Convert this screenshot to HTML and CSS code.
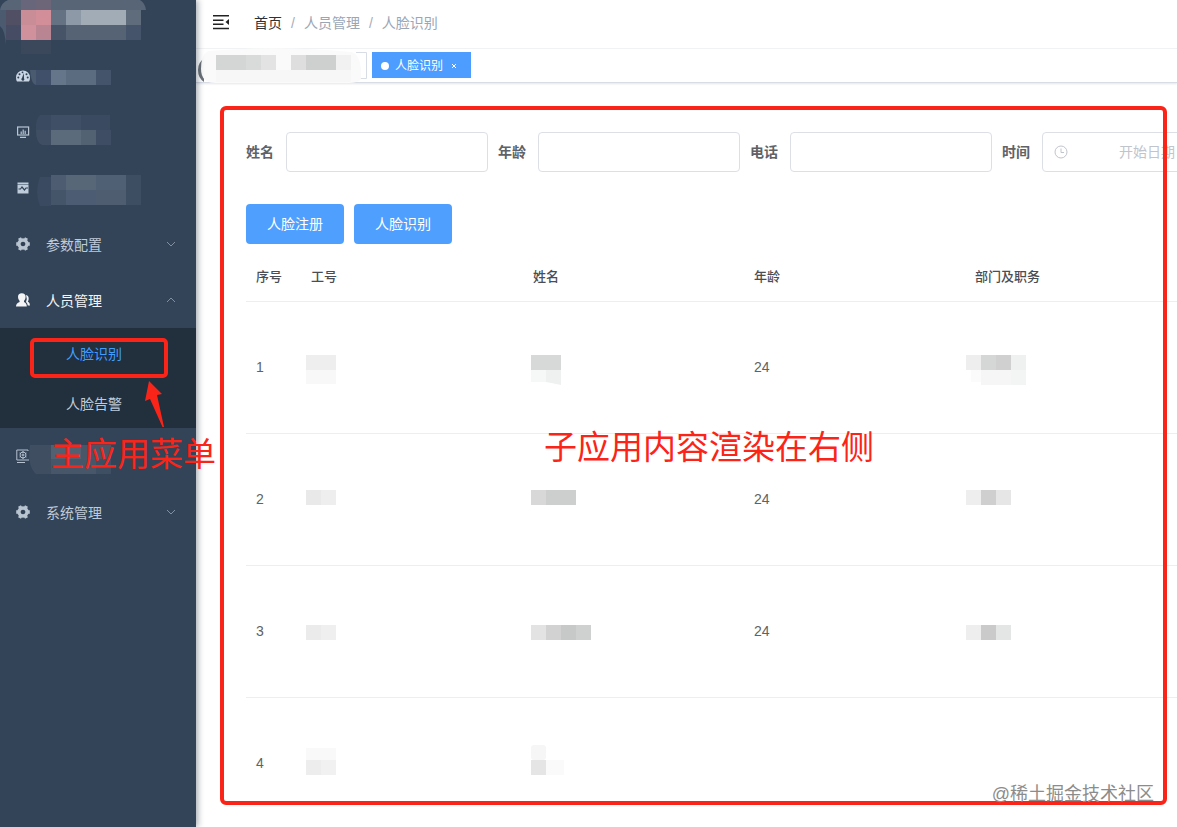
FILE: index.html
```html
<!DOCTYPE html>
<html lang="zh-CN">
<head>
<meta charset="utf-8">
<meta name="viewport" content="width=device-width, initial-scale=1">
<title>人脸识别</title>
<link rel="stylesheet" href="styles.css">
</head>
<body>
<div class="app">
  <aside class="sidebar">
    <svg class="logo" viewBox="0 0 196 48" aria-hidden="true">
      <path d="M8 0H140Q145 3 146 10H0Q1 3 8 0Z" fill="#586576"/>
      <path d="M0 10H6V45Q5 30 0 26Z" fill="#4c5a70"/>
      <rect x="6" y="10" width="15" height="15" fill="#504f64"/><rect x="6" y="25" width="15" height="15" fill="#454c63"/>
      <rect x="21" y="0" width="15" height="10" fill="#68667a"/><rect x="36" y="0" width="15" height="10" fill="#6c6678"/>
      <rect x="21" y="10" width="15" height="15" fill="#c98d98"/><rect x="36" y="10" width="15" height="15" fill="#d28f9a"/>
      <rect x="21" y="25" width="15" height="15" fill="#d0909c"/><rect x="36" y="25" width="15" height="15" fill="#b98592"/>
      <rect x="21" y="40" width="30" height="14" fill="#3b475b"/>
      <rect x="51" y="10" width="15" height="15" fill="#657284"/><rect x="51" y="25" width="15" height="15" fill="#475468"/>
      <rect x="66" y="10" width="15" height="15" fill="#8d99a6"/><rect x="81" y="10" width="45" height="15" fill="#a2acb7"/>
      <rect x="126" y="10" width="15" height="15" fill="#5f6c7c"/>
      <rect x="66" y="25" width="60" height="15" fill="#566375"/><rect x="126" y="25" width="15" height="15" fill="#45546a"/>
    </svg>
    <nav>
      <ul class="menu">
        <li><a class="item" href="#">
          <svg class="icon" viewBox="0 0 14 14"><path d="M7 1.500A7 7 0 0 0 0 8.500Q0 11 1 12.500H13Q14 11 14 8.500A7 7 0 0 0 7 1.500Z" fill="#c9d6e4"/><path d="M7.800 4 8 9.300A1.500 1.500 0 1 1 6 9Z" fill="#304156"/><g fill="#304156"><circle cx="2.300" cy="8.500" r="1"/><circle cx="3.500" cy="5.200" r="1"/><circle cx="6.500" cy="3.300" r=".9"/><circle cx="10.500" cy="5.200" r="1"/><circle cx="11.700" cy="8.500" r="1"/></g></svg>
          <svg class="mask" viewBox="0 0 120 56"><path d="M0 22H6V37Q1 36 0 22Z" fill="#4a5b70"/><rect x="6" y="22" width="15" height="15" fill="#40506a"/><rect x="21" y="22" width="15" height="15" fill="#66768a"/><rect x="36" y="22" width="30" height="15" fill="#5b6b80"/><rect x="66" y="22" width="15" height="15" fill="#44546b"/></svg>
        </a></li>
        <li><a class="item" href="#">
          <svg class="icon" viewBox="0 0 14 14" fill="none" stroke="#b8c5d3" stroke-width="1.200"><rect x="1.600" y="2" width="11" height="8"/><path d="M4 12.300H10M5.200 9V6.500M7.200 9V4.500M9.200 9V5.800"/></svg>
          <svg class="mask" viewBox="0 0 120 56"><path d="M10 11H80V26H6Q5 16 10 11Z" fill="#3a4a60"/><path d="M6 26H21V41H12Q6 39 6 26Z" fill="#3f4e63"/><rect x="21" y="11" width="30" height="15" fill="#3f4f65"/><rect x="21" y="26" width="30" height="15" fill="#5b6b7b"/><rect x="51" y="26" width="15" height="15" fill="#536273"/><rect x="66" y="26" width="15" height="15" fill="#3e4d64"/></svg>
        </a></li>
        <li><a class="item" href="#">
          <svg class="icon" viewBox="0 0 14 14"><path d="M1.500 1.500H12.500V3H1.500ZM1.500 3.500H12.500V12.500H1.500Z" fill="#bfccda"/><path d="M2.500 8H4.500L6 6 8.500 9 10 7H12" fill="none" stroke="#304156" stroke-width="1.200"/></svg>
          <svg class="mask" viewBox="0 0 120 56"><path d="M10 17H21V46H10Q4 32 10 17Z" fill="#3a4a60"/><rect x="21" y="15" width="15" height="15" fill="#4d5c70"/><rect x="36" y="15" width="30" height="15" fill="#586778"/><rect x="66" y="15" width="30" height="15" fill="#506074"/><rect x="21" y="30" width="15" height="15" fill="#445469"/><rect x="36" y="30" width="30" height="15" fill="#4b5c73"/><rect x="66" y="30" width="30" height="15" fill="#4e5e70"/><rect x="96" y="15" width="15" height="30" fill="#3e4e62"/></svg>
        </a></li>
        <li><a class="item" href="#">
          <svg class="icon" viewBox="0 0 14 14"><g fill="none" stroke="#b8c4d0"><circle cx="7" cy="7" r="4" stroke-width="3.400"/><path d="M3.500 1 10.500 13M10.500 1 3.500 13M.2 7H3M11 7H13.800" stroke-width="3.400"/></g><circle cx="7" cy="7" r="2.300" fill="#304156"/></svg>
          <span class="label">参数配置</span>
          <svg class="chevron" viewBox="0 0 10 6"><path d="M1 1 5 5 9 1"/></svg>
        </a></li>
        <li><a class="item open" href="#" aria-expanded="true">
          <svg class="icon" viewBox="0 0 14 14" fill="#f4f4f5"><path d="M2 4Q2 .3 5.800 .3T9.600 4Q9.600 6.500 8 8V9Q10.800 10 10.800 13.500H0Q0 10 3.600 9V8Q2 6.500 2 4Z"/><path d="M10 2Q12.800 2.500 12.700 6 12.500 7.500 11.800 8.500 14 9.500 14 12.500H11.800Q11.500 10 10 9Q11.500 6 10 2Z"/></svg>
          <span class="label">人员管理</span>
          <svg class="chevron" viewBox="0 0 10 6"><path d="M1 5 5 1 9 5"/></svg>
        </a>
          <ul class="submenu">
            <li><a class="subitem active" href="#">人脸识别</a></li>
            <li><a class="subitem" href="#">人脸告警</a></li>
            <li class="note note-box" aria-hidden="true"></li>
            <li class="note note-arrow" aria-hidden="true"><svg viewBox="0 0 20 47"><path d="M4 0 17 13 12 14 19 46H17.500L5 18 0 20Z" fill="#fb2418"/></svg></li>
            <li class="note note-menu">主应用菜单</li>
          </ul>
        </li>
        <li><a class="item" href="#">
          <svg class="icon" viewBox="0 0 14 14" fill="none" stroke="#b5c1ce"><path d="M12 2V1H.8V11H13M1 13.500H9"/><circle cx="7" cy="6" r="3"/><circle cx="7" cy="6" r="1"/><path d="M7 2V4M7 8V10M3.500 4 5 5M9 7 10.500 8M10.500 4 9 5M5 7 3.500 8"/></svg>
          <svg class="mask" viewBox="0 0 120 56"><path d="M0 17H21V46H6Q-3 38 0 17Z" fill="#404e62"/><rect x="21" y="17" width="30" height="14" fill="#526071"/><rect x="51" y="17" width="30" height="14" fill="#485668"/><rect x="21" y="31" width="45" height="15" fill="#48566a"/><rect x="66" y="31" width="15" height="15" fill="#3e4e63"/></svg>
        </a></li>
        <li><a class="item" href="#">
          <svg class="icon" viewBox="0 0 14 14"><g fill="none" stroke="#b8c4d0"><circle cx="7" cy="7" r="4" stroke-width="3.400"/><path d="M3.500 1 10.500 13M10.500 1 3.500 13M.2 7H3M11 7H13.800" stroke-width="3.400"/></g><circle cx="7" cy="7" r="2.300" fill="#304156"/></svg>
          <span class="label">系统管理</span>
          <svg class="chevron" viewBox="0 0 10 6"><path d="M1 1 5 5 9 1"/></svg>
        </a></li>
      </ul>
    </nav>
  </aside>

  <main class="main">
    <header class="navbar">
      <button class="hamburger" type="button" aria-label="收起菜单">
        <svg viewBox="0 0 16 16"><path d="M0 1.700H16M0 6.200H10.500M0 10.200H10.500M0 14.500H16" stroke="#222" stroke-width="1.500"/><path d="M16 5V11L12.500 8Z" fill="#222"/></svg>
      </button>
      <nav class="breadcrumb" aria-label="面包屑">
        <a href="#">首页</a><span class="sep">/</span><span>人员管理</span><span class="sep">/</span><span>人脸识别</span>
      </nav>
    </header>
    <div class="tags">
      <svg class="tags-mask" viewBox="0 0 171 33" aria-hidden="true">
        <path d="M160 3.500H170.500V29.500H160" fill="#fff" stroke="#d8dce5"/>
        <path d="M8 10Q2 13 2 21T8 33Z" fill="#6c7278"/>
        <path d="M12 2Q80 -4 155 3Q166 5 165 29Q165 34 150 34H20Q5 34 5 20T12 2Z" fill="#fafafa"/>
        <rect x="20" y="6" width="30" height="15" fill="#d4d5d5"/><rect x="50" y="6" width="15" height="15" fill="#d9dada"/><rect x="65" y="6" width="15" height="15" fill="#e3e3e3"/>
        <rect x="95" y="6" width="15" height="15" fill="#dedede"/><rect x="110" y="6" width="30" height="15" fill="#cecfcf"/><rect x="140" y="6" width="15" height="15" fill="#f1f1f1"/>
        <rect x="20" y="21" width="135" height="12" fill="#f7f7f7"/>
      </svg>
      <a class="tag" href="#"><span class="dot"></span>人脸识别<svg class="close" viewBox="0 0 6 6"><path d="M1 1 5 5M5 1 1 5"/></svg></a>
    </div>

    <section class="content">
      <form class="filters">
        <label for="name">姓名</label><input id="name" type="text">
        <label for="age">年龄</label><input id="age" type="text">
        <label for="phone">电话</label><input id="phone" type="text">
        <label for="start">时间</label>
        <div class="range">
          <svg viewBox="0 0 14 14" fill="none" stroke="#c0c4cc"><circle cx="7" cy="7" r="6"/><path d="M7 3.500V7.500H10"/></svg>
          <input id="start" type="text" placeholder="开始日期">
        </div>
      </form>
      <div class="actions">
        <button type="button">人脸注册</button>
        <button type="button">人脸识别</button>
      </div>
      <table class="grid">
        <colgroup><col class="c-index"><col class="c-no"><col class="c-mid"><col class="c-mid"><col></colgroup>
        <thead><tr><th>序号</th><th>工号</th><th>姓名</th><th>年龄</th><th>部门及职务</th></tr></thead>
        <tbody>
          <tr>
            <td>1</td>
            <td class="m-no"><svg viewBox="0 0 80 60"><rect y="17" width="30" height="15" fill="#eee"/><rect y="32" width="30" height="14" fill="#f8f8f8"/></svg></td>
            <td class="m-name"><svg viewBox="0 0 80 60"><rect y="17" width="30" height="15" fill="#d7d8d8"/><rect y="32" width="15" height="12" fill="#f6f7f7"/><path d="M15 32H30V47L15 44Z" fill="#eff1f1"/></svg></td>
            <td>24</td>
            <td class="m-dept"><svg viewBox="0 0 80 60"><rect y="17" width="15" height="15" fill="#eee"/><rect x="15" y="17" width="15" height="15" fill="#d5d6d6"/><rect x="30" y="17" width="15" height="15" fill="#d0d0d0"/><rect x="45" y="17" width="15" height="15" fill="#eff1f1"/><rect x="5" y="32" width="10" height="12" fill="#fbfbfb"/><rect x="15" y="32" width="30" height="15" fill="#f6f6f6"/><rect x="45" y="32" width="15" height="15" fill="#f3f4f4"/></svg></td>
          </tr>
          <tr>
            <td>2</td>
            <td class="m-no"><svg viewBox="0 0 80 60"><rect y="20" width="15" height="15" fill="#e9e9e9"/><rect x="15" y="20" width="15" height="15" fill="#eee"/></svg></td>
            <td class="m-name"><svg viewBox="0 0 80 60"><rect y="20" width="15" height="15" fill="#d8d8d8"/><rect x="15" y="20" width="30" height="15" fill="#cdcece"/></svg></td>
            <td>24</td>
            <td class="m-dept"><svg viewBox="0 0 80 60"><rect y="20" width="15" height="15" fill="#eee"/><rect x="15" y="20" width="15" height="15" fill="#cfcfcf"/><rect x="30" y="20" width="15" height="15" fill="#e6e6e6"/></svg></td>
          </tr>
          <tr>
            <td>3</td>
            <td class="m-no"><svg viewBox="0 0 80 60"><rect y="23" width="15" height="15" fill="#ebebeb"/><rect x="15" y="23" width="15" height="15" fill="#efefef"/></svg></td>
            <td class="m-name"><svg viewBox="0 0 80 60"><rect y="23" width="15" height="15" fill="#e3e3e3"/><rect x="15" y="23" width="15" height="15" fill="#d2d2d2"/><rect x="30" y="23" width="15" height="15" fill="#c7c9c9"/><rect x="45" y="23" width="15" height="15" fill="#cfd0d0"/></svg></td>
            <td>24</td>
            <td class="m-dept"><svg viewBox="0 0 80 60"><rect y="23" width="15" height="15" fill="#eee"/><rect x="15" y="23" width="15" height="15" fill="#cacaca"/><rect x="30" y="23" width="15" height="15" fill="#e4e5e5"/></svg></td>
          </tr>
          <tr>
            <td>4</td>
            <td class="m-no"><svg viewBox="0 0 80 60"><rect y="14" width="30" height="12" fill="#f9f9f9"/><rect y="26" width="15" height="15" fill="#ededed"/><rect x="15" y="26" width="15" height="15" fill="#f1f1f1"/></svg></td>
            <td class="m-name"><svg viewBox="0 0 80 60"><rect y="11" width="15" height="15" rx="3" fill="#f6f6f6"/><rect y="26" width="15" height="15" fill="#e5e5e5"/><rect x="15" y="26" width="18" height="15" fill="#fafafa"/></svg></td>
            <td></td>
            <td></td>
          </tr>
        </tbody>
      </table>
    </section>
    <div class="note note-frame" aria-hidden="true"></div>
    <div class="note note-content">子应用内容渲染在右侧</div>
    <div class="watermark">@稀土掘金技术社区</div>
  </main>
</div>
</body>
</html>
```

FILE: styles.css
```css
* { box-sizing: border-box; }
body {
  margin: 0;
  background: #fff;
  color: #606266;
  font: 14px/20px "Liberation Sans", "Noto Sans CJK SC", sans-serif;
}
a { color: inherit; text-decoration: none; }
ul { margin: 0; padding: 0; list-style: none; }
svg { display: block; flex: none; overflow: visible; }
button, input { font: inherit; }

.app { display: flex; height: 100vh; overflow: hidden; }

/* Sidebar */
.sidebar {
  position: relative;
  z-index: 2;
  flex: 0 0 196px;
  background: #334459;
  box-shadow: 2px 0 6px rgba(0, 21, 41, .35);
}
.logo { width: 196px; height: 48px; }
.item {
  display: flex;
  align-items: center;
  height: 56px;
  padding: 0 20px 0 16px;
  color: #bfcbd9;
}
.item.open { color: #f4f4f5; }
.icon { width: 14px; height: 14px; }
.label { flex: 1; margin-left: 16px; padding-top: 2px; }
.mask { width: 120px; height: 56px; }
.chevron {
  width: 10px;
  height: 6px;
  fill: none;
  stroke: #8290a2;
}
.submenu { position: relative; background: #222f3c; }
.subitem {
  display: flex;
  align-items: center;
  height: 50px;
  padding: 2px 0 0 66px;
  color: #bfcbd9;
}
.subitem.active { color: #409eff; }

/* Annotations */
.note { position: absolute; pointer-events: none; }
.note-box {
  top: 10px;
  left: 30px;
  width: 138px;
  height: 40px;
  border: 4px solid #fb2418;
  border-radius: 5px;
}
.note-arrow { top: 53px; left: 145px; }
.note-arrow svg { width: 20px; height: 47px; }
.note-menu, .note-content {
  color: #fb2418;
  font-size: 33px;
  line-height: 40px;
  white-space: nowrap;
}
.note-menu { top: 107px; left: 51px; }
.note-content { top: 428px; left: 348px; }
.note-frame {
  inset: 106px 10px 22px 24px;
  border: 4px solid #fb2418;
  border-radius: 6px;
}
.watermark {
  position: absolute;
  right: 23px;
  bottom: 21px;
  color: #8c8c8c;
  font-size: 18px;
  line-height: 24px;
}

/* Top bars */
.main { position: relative; flex: 1; min-width: 0; overflow: hidden; }
.navbar {
  display: flex;
  align-items: center;
  height: 49px;
  padding: 0 17px 4px;
  border-bottom: 1px solid #f2f3f4;
}
.hamburger { padding: 0; border: 0; background: none; }
.hamburger svg { width: 16px; height: 16px; }
.breadcrumb { display: flex; margin-left: 25px; padding-top: 2px; color: #9aa6b6; }
.breadcrumb a { color: #303133; }
.sep { margin: 0 9px; color: #a8adb8; }
.tags {
  display: flex;
  gap: 5px;
  height: 34px;
  border-bottom: 1px solid #d8dce5;
  box-shadow: 0 1px 2px rgba(0, 0, 0, .1);
}
.tags-mask { width: 171px; height: 33px; }
.tag {
  display: flex;
  align-items: center;
  height: 26px;
  margin-top: 3px;
  padding: 2px 14px 0 9px;
  background: #4c9dff;
  color: #fff;
  font-size: 12px;
}
.dot { width: 8px; height: 8px; margin-right: 6px; border-radius: 50%; background: #fff; }
.close { width: 6px; height: 6px; margin-left: 8px; fill: none; stroke: #fff; }

/* Content */
.content { padding: 49px 24px 0 50px; }
.filters { display: flex; align-items: center; }
.filters label { flex: none; padding-right: 12px; font-weight: 700; }
.filters > input {
  flex: none;
  width: 202px;
  height: 40px;
  margin-right: 10px;
  padding: 0 15px;
  border: 1px solid #dcdfe6;
  border-radius: 4px;
}
.range {
  display: flex;
  flex: none;
  align-items: center;
  width: 400px;
  height: 40px;
  padding: 0 11px;
  border: 1px solid #dcdfe6;
  border-radius: 4px;
}
.range svg { width: 14px; height: 14px; }
.range input { width: 158px; border: 0; background: none; text-align: center; }
.range input::placeholder { color: #c0c4cc; opacity: 1; }
.actions { display: flex; gap: 10px; margin-top: 32px; }
.actions button {
  height: 40px;
  padding: 0 21px;
  border: 0;
  border-radius: 4px;
  background: #4f9fff;
  color: #fff;
}
.grid {
  width: calc(100% + 24px);
  margin-top: 10px;
  border-collapse: separate;
  border-spacing: 0;
  table-layout: fixed;
}
.c-index { width: 55px; }
.c-no { width: 222px; }
.c-mid { width: 221px; }
.grid th, .grid td { padding: 0 10px 2px; border-bottom: 1px solid #ebeef5; text-align: left; }
.grid th { height: 48px; color: #4a4d54; font-size: 13px; font-weight: 500; }
.grid td { height: 132px; }
.grid td svg { width: 80px; height: 60px; }
.grid .m-no { padding: 0 0 0 5px; }
.grid .m-name { padding: 0 0 0 8px; }
.grid .m-dept { padding: 0 0 0 1px; }
```
